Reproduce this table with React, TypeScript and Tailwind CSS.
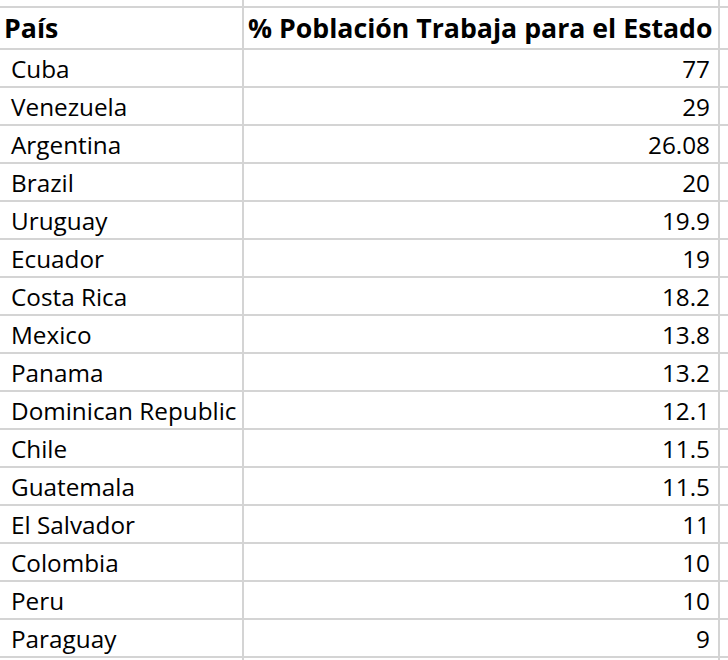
const rows: [string, string][] = [
  ["Cuba", "77"],
  ["Venezuela", "29"],
  ["Argentina", "26.08"],
  ["Brazil", "20"],
  ["Uruguay", "19.9"],
  ["Ecuador", "19"],
  ["Costa Rica", "18.2"],
  ["Mexico", "13.8"],
  ["Panama", "13.2"],
  ["Dominican Republic", "12.1"],
  ["Chile", "11.5"],
  ["Guatemala", "11.5"],
  ["El Salvador", "11"],
  ["Colombia", "10"],
  ["Peru", "10"],
  ["Paraguay", "9"],
];

function Row({ a, b, className, bold }: { a: string; b: string; className: string; bold?: boolean }) {
  const pad = bold ? "pt-[1px]" : "pt-[2px]";
  return (
    <div className={`flex border-b-2 border-[#d4d4d4] ${className}`}>
      <div className={`w-[244px] border-r-2 border-[#d4d4d4] flex items-center ${pad} ${bold ? "pl-[4px] font-bold" : "pl-[11px]"}`}>
        {a}
      </div>
      <div
        className={`w-[476px] border-r-2 border-[#d4d4d4] flex items-center ${pad} ${
          bold ? "pl-[4px] font-bold" : "justify-end pr-[8px]"
        }`}
      >
        {b}
      </div>
      <div className="flex-1" />
    </div>
  );
}

export default function App() {
  return (
    <div className="w-[728px] h-[660px] bg-white text-black overflow-hidden font-['Open_Sans',sans-serif] text-[24.3px] leading-none">
      <Row a="" b="" className="h-[8px]" />
      <Row a="País" b="% Población Trabaja para el Estado" bold className="h-[42px] text-[26.7px]" />
      {rows.map(([c, v]) => (
        <Row key={c} a={c} b={v} className="h-[38px]" />
      ))}
      <Row a="" b="" className="h-[10px] border-b-0" />
    </div>
  );
}
